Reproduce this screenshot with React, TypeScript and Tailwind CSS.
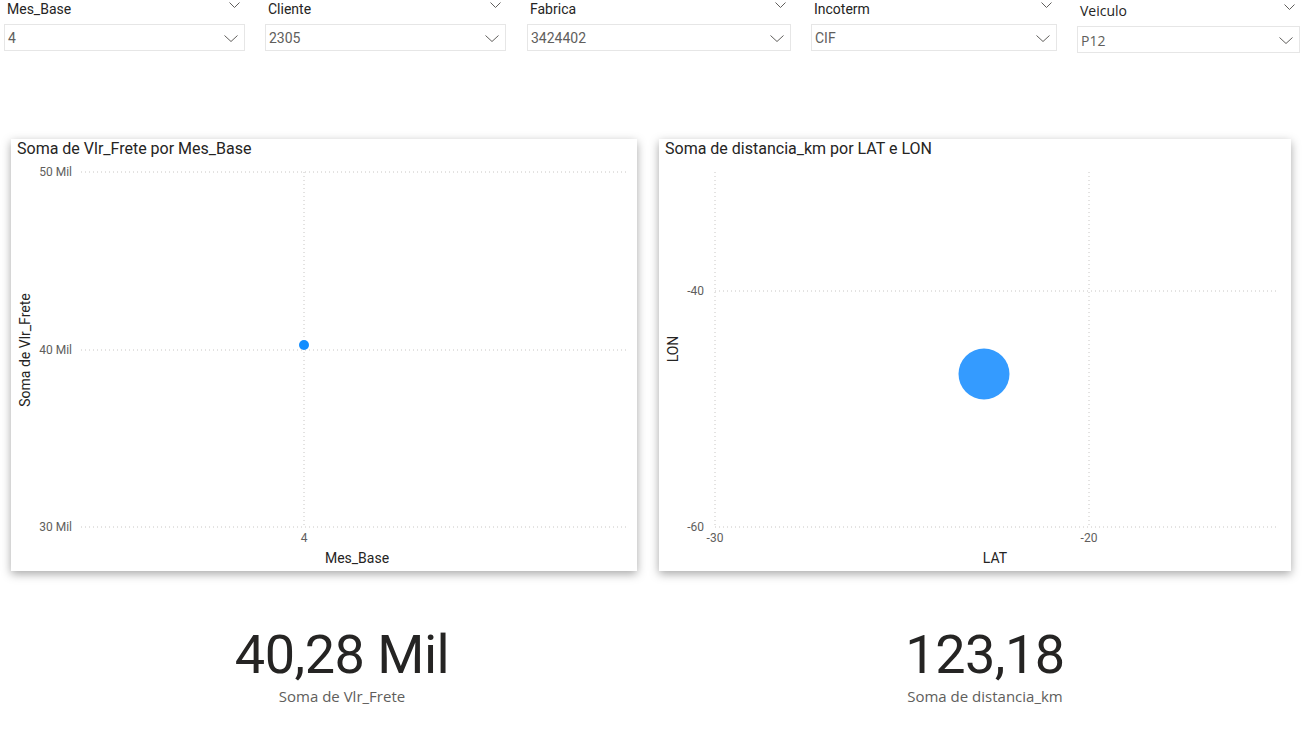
import React from 'react';

const Chevron: React.FC<{ w?: number; h?: number }> = ({ w = 14, h = 7 }) => (
  <svg width={w} height={h} viewBox={`0 0 ${w} ${h}`} fill="none">
    <polyline points={`0.5,0.5 ${w / 2},${h - 0.5} ${w - 0.5},0.5`} stroke="#605E5C" strokeWidth="1" />
  </svg>
);

type SlicerProps = { label: string; value: string; width: string; margin: string; segoe?: boolean };

const Slicer: React.FC<SlicerProps> = ({ label, value, width, margin, segoe }) => {
  const font = segoe ? "font-['Open_Sans',sans-serif]" : "font-['Roboto',sans-serif]";
  return (
    <div className={`${width} ${margin} flex flex-col`}>
      <div className="h-[24px] flex justify-between items-start pl-[3px] pr-[5px]">
        <span className={`${font} text-[14px] leading-[18px] text-[#252423]`}>{label}</span>
        <span className="mt-[2px]">
          <Chevron w={11} h={6} />
        </span>
      </div>
      <div className="h-[27px] border border-[#E6E6E6] flex items-center justify-between pl-[3px] pr-[6px] pt-[1px]">
        <span className={`${font} text-[14px] text-[#605E5C]`}>{value}</span>
        <Chevron />
      </div>
    </div>
  );
};

const grid = { stroke: '#C8C6C4', strokeWidth: 1, strokeDasharray: '1 3' };
const tick = { fill: '#605E5C', fontSize: 12, fontFamily: 'Roboto, sans-serif' };
const axisTitle = { fill: '#252423', fontSize: 14, fontFamily: 'Roboto, sans-serif' };

const Card: React.FC<{ title: string; width: string; margin: string; children: React.ReactNode }> = ({
  title,
  width,
  margin,
  children,
}) => (
  <div className={`${width} ${margin} h-[432px] bg-white shadow-[0_3px_9px_rgba(0,0,0,0.35)] flex flex-col`}>
    <div className="h-[22px] pl-[6px] font-['Roboto',sans-serif] text-[16px] leading-[20px] text-[#252423]">
      {title}
    </div>
    {children}
  </div>
);

export default function App() {
  return (
    <div className="w-[1302px] h-[730px] bg-white overflow-hidden">
      {/* Slicers */}
      <div className="flex items-start">
        <Slicer label="Mes_Base" value="4" width="w-[241px]" margin="ml-[4px]" />
        <Slicer label="Cliente" value="2305" width="w-[241px]" margin="ml-[20px]" />
        <Slicer label="Fabrica" value="3424402" width="w-[264px]" margin="ml-[21px]" />
        <Slicer label="Incoterm" value="CIF" width="w-[246px]" margin="ml-[20px]" />
        <Slicer label="Veiculo" value="P12" width="w-[223px]" margin="ml-[20px] mt-[2px]" segoe />
      </div>

      {/* Charts */}
      <div className="flex mt-[86px]">
        <Card title="Soma de Vlr_Frete por Mes_Base" width="w-[626px]" margin="ml-[11px]">
          <svg width="626" height="410" viewBox="0 22 626 410">
            <line x1="70" y1="33" x2="617" y2="33" {...grid} />
            <line x1="70" y1="211" x2="617" y2="211" {...grid} />
            <line x1="70" y1="388" x2="617" y2="388" {...grid} />
            <line x1="293" y1="33" x2="293" y2="388" {...grid} />
            <text x="61" y="37" textAnchor="end" {...tick}>50 Mil</text>
            <text x="61" y="215" textAnchor="end" {...tick}>40 Mil</text>
            <text x="61" y="392" textAnchor="end" {...tick}>30 Mil</text>
            <text x="293" y="403" textAnchor="middle" {...tick}>4</text>
            <text x="346" y="424" textAnchor="middle" {...axisTitle}>Mes_Base</text>
            <text x="0" y="0" textAnchor="middle" transform="translate(19 211) rotate(-90)" {...axisTitle}>
              Soma de Vlr_Frete
            </text>
            <circle cx="293" cy="206" r="5" fill="#118DFF" />
          </svg>
        </Card>
        <Card title="Soma de distancia_km por LAT e LON" width="w-[632px]" margin="ml-[22px]">
          <svg width="632" height="410" viewBox="0 22 632 410">
            <line x1="56" y1="152" x2="617" y2="152" {...grid} />
            <line x1="56" y1="388" x2="617" y2="388" {...grid} />
            <line x1="56" y1="33" x2="56" y2="388" {...grid} />
            <line x1="430" y1="33" x2="430" y2="388" {...grid} />
            <text x="45" y="156" textAnchor="end" {...tick}>-40</text>
            <text x="45" y="392" textAnchor="end" {...tick}>-60</text>
            <text x="56" y="403" textAnchor="middle" {...tick}>-30</text>
            <text x="430" y="403" textAnchor="middle" {...tick}>-20</text>
            <text x="336" y="424" textAnchor="middle" {...axisTitle}>LAT</text>
            <text x="0" y="0" textAnchor="middle" transform="translate(19 210) rotate(-90)" {...axisTitle}>
              LON
            </text>
            <circle cx="325" cy="235" r="25.5" fill="#349BFF" />
          </svg>
        </Card>
      </div>

      {/* KPIs */}
      <div className="flex mt-[56px]">
        <div className="w-[484px] ml-[100px] flex flex-col items-center">
          <div className="font-['Roboto',sans-serif] text-[54px] leading-[56px] text-[#252423] tracking-[-0.5px]">
            40,28 Mil
          </div>
          <div className="mt-[2px] font-['Open_Sans',sans-serif] text-[15px] text-[#605E5C]">Soma de Vlr_Frete</div>
        </div>
        <div className="w-[484px] ml-[159px] flex flex-col items-center">
          <div className="font-['Roboto',sans-serif] text-[54px] leading-[56px] text-[#252423] tracking-[-0.5px]">
            123,18
          </div>
          <div className="mt-[2px] font-['Open_Sans',sans-serif] text-[15px] text-[#605E5C]">Soma de distancia_km</div>
        </div>
      </div>
    </div>
  );
}
